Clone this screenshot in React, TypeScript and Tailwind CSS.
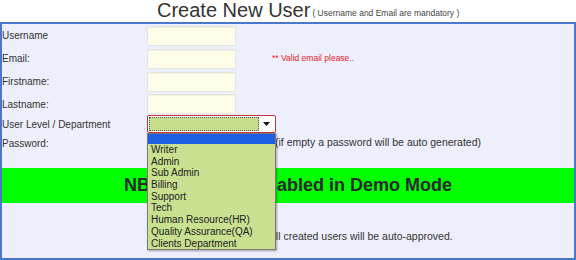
import React from 'react';

const levels = [
  'Writer',
  'Admin',
  'Sub Admin',
  'Billing',
  'Support',
  'Tech',
  'Human Resource(HR)',
  'Quality Assurance(QA)',
  'Clients Department',
];

function TextInput() {
  return <div className="w-[89px] h-[20px] bg-[#fdfde9] border border-[#e6e6e0] shadow-[inset_0_1px_1px_rgba(0,0,0,0.06)]" />;
}

export default function App() {
  return (
    <div className="w-[576px] h-[260px] bg-white text-[#333] font-['Liberation_Sans',Arial,sans-serif]">
      {/* Heading */}
      <div className="h-[22px] pl-[157px] flex items-end pb-[1px]">
        <span className="text-[20px] leading-[22px] text-[#333]">Create New User</span>
        <span className="text-[8.5px] leading-[14px] ml-[2px] mb-[1px] text-[#444]">( Username and Email are mandatory )</span>
      </div>

      {/* Form box */}
      <div className="w-[576px] h-[238px] border-2 border-[#4b76cc] bg-[#eeeffc] flex flex-col text-[10px]">
        <div className="grid grid-cols-[145px_1fr]">
          <div className="h-[23px] flex items-center">Username</div>
          <div className="h-[23px] flex items-center"><TextInput /></div>

          <div className="h-[23px] flex items-center">Email:</div>
          <div className="h-[23px] flex items-center gap-[36px]">
            <TextInput />
            <span className="text-[8.5px] text-[#e3212b]">** Valid email please..</span>
          </div>

          <div className="h-[23px] flex items-center">Firstname:</div>
          <div className="h-[23px] flex items-center"><TextInput /></div>

          <div className="h-[22px] flex items-center">Lastname:</div>
          <div className="h-[22px] flex items-center"><TextInput /></div>

          <div className="h-[18px] flex items-center">User Level / Department</div>
          <div className="h-[18px] relative">
            <div className="w-[129px] h-[18px] border border-[#c8323a] rounded-[2px] bg-white flex p-[1px]">
              <div className="flex-1 bg-[#c5df8f] border border-dotted border-[#555]" />
              <div className="w-[15px] flex items-center justify-center">
                <svg width="7" height="4" viewBox="0 0 7 4"><path d="M0 0h7L3.5 4z" fill="#111" /></svg>
              </div>
            </div>
            <div className="absolute left-0 top-[18px] z-10 w-[129px] bg-[#c8e090] border border-[#7b7b7b] shadow-[1px_1px_2px_rgba(0,0,0,0.35)]">
              <div className="h-[10px] bg-[#1d5fe2]" />
              {levels.map((l) => (
                <div key={l} className="h-[11.7px] leading-[11.7px] pl-[3px] text-[10px] text-[#222] overflow-hidden">{l}</div>
              ))}
            </div>
          </div>

          <div className="h-[20px] flex items-center">Password:</div>
          <div className="h-[20px] flex items-center">
            <div className="w-[124px] h-[16px] bg-[#fdfde9] border border-[#e6e6e0]" />
            <span className="ml-[4px] text-[10.5px]">(if empty a password will be auto generated)</span>
          </div>
        </div>

        <div className="mt-[15px] h-[35px] bg-[#00ff00] flex items-center justify-center">
          <span className="text-[18px] font-bold text-[#2a2a2a]">NB: Feature is disabled in Demo Mode</span>
        </div>

        <div className="mt-[27px] grid grid-cols-[145px_1fr]">
          <div />
          <div className="h-[14px] flex items-center pl-[102px] text-[10.5px]">NB: All created users will be auto-approved.</div>
        </div>
      </div>
    </div>
  );
}
